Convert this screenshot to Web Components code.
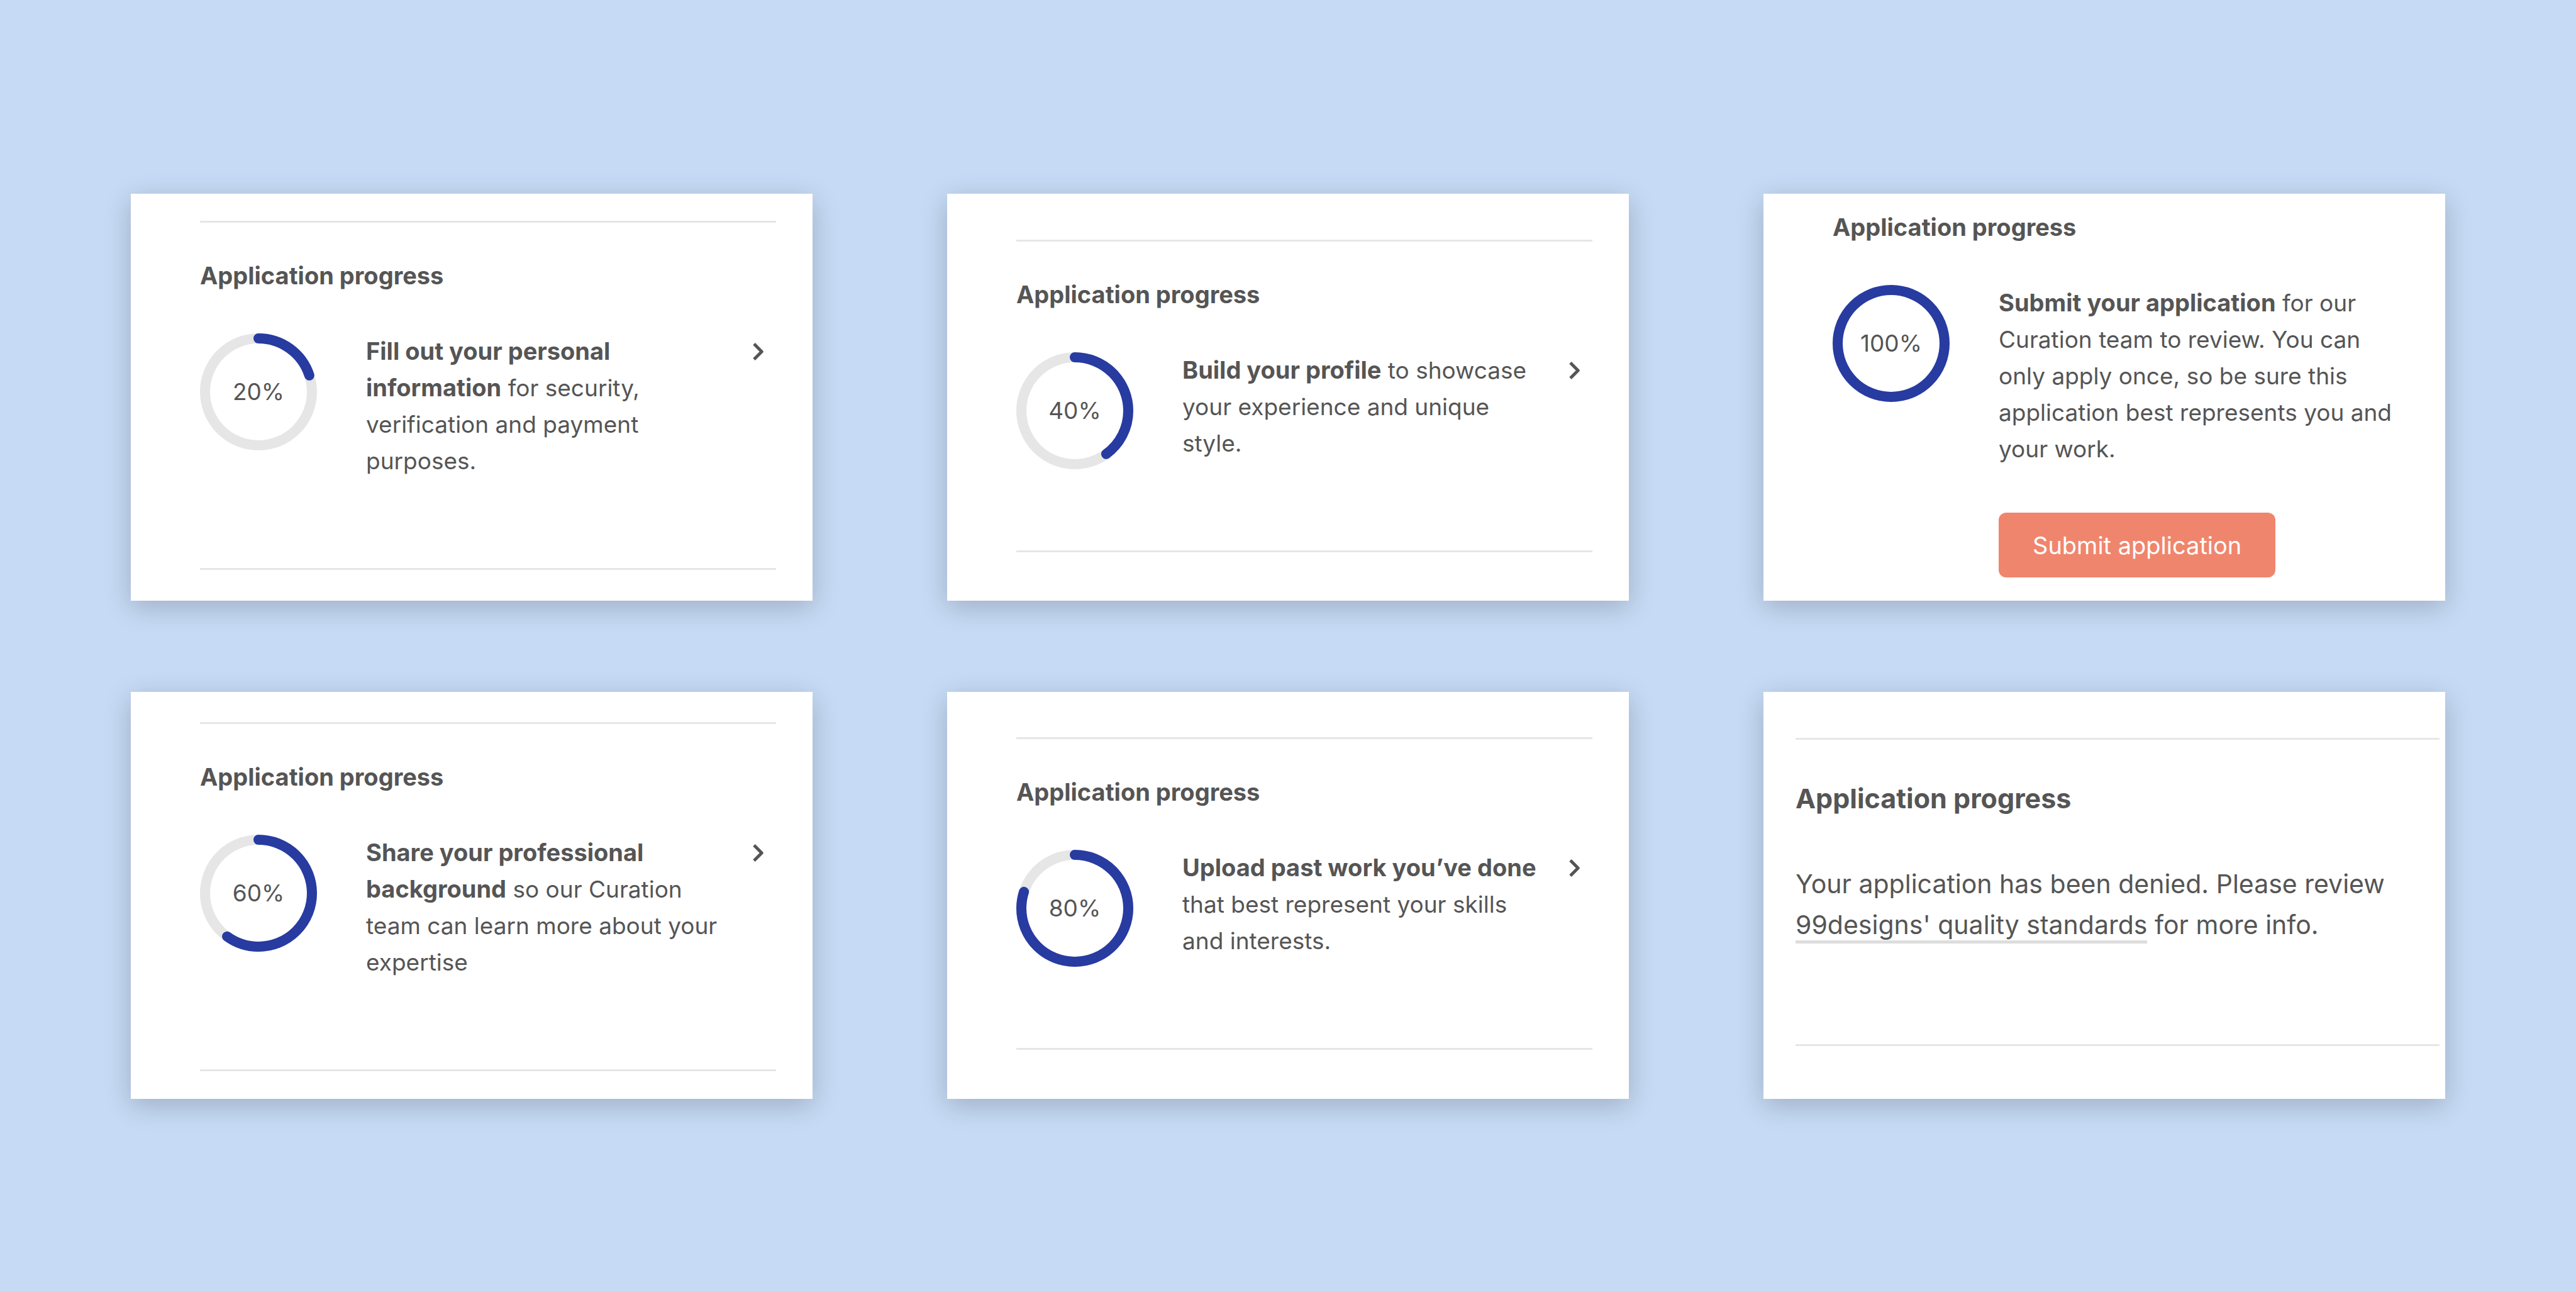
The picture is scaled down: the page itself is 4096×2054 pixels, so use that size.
<!DOCTYPE html>
<html lang="en">
<head>
<meta charset="utf-8">
<meta name="viewport" content="width=device-width, initial-scale=1">
<title>Application progress</title>
<style>
  body {
    margin: 0;
    background: #c6daf5;
    color: #555;
    font-family: Inter, "Liberation Sans", sans-serif;
  }
</style>
</head>
<body>
<card-board>
  <progress-card style="--inset-top: 43px; --inset-bottom: 49px">
    <progress-step value="20" href="#personal"><b>Fill out your personal information</b> for security, verification and payment purposes.</progress-step>
  </progress-card>
  <progress-card style="--inset-top: 73px">
    <progress-step value="40" href="#profile"><b>Build your profile</b> to showcase your experience and unique style.</progress-step>
  </progress-card>
  <progress-card plain style="--inset-top: 24px">
    <progress-step value="100"><b>Submit your application</b> for our Curation team to review. You can only apply once, so be sure this application best represents you and your work.
      <action-button slot="action">Submit application</action-button>
    </progress-step>
  </progress-card>
  <progress-card style="--inset-top: 48px; --inset-bottom: 44px">
    <progress-step value="60" href="#background"><b>Share your professional background</b> so our Curation team can learn more about your expertise</progress-step>
  </progress-card>
  <progress-card style="--inset-top: 72px">
    <progress-step value="80" href="#portfolio"><b>Upload past work you’ve done</b> that best represent your skills and interests.</progress-step>
  </progress-card>
  <progress-card large style="--inset-top: 73px">
    <status-message>Your application has been denied. Please review <text-link href="#quality">99designs' quality standards</text-link> for more info.</status-message>
  </progress-card>
</card-board>

<script>
  class BaseElement extends HTMLElement {
    connectedCallback() {
      if (this.shadowRoot) return;
      this.attachShadow({ mode: 'open' }).innerHTML = this.render();
    }
  }

  customElements.define('card-board', class extends BaseElement {
    render() {
      return `
        <style>
          :host { display: block; }
          main {
            display: grid;
            grid-template-columns: repeat(3, minmax(0, 1fr));
            gap: 145px 214px;
            padding: 308px 208px;
          }
        </style>
        <main><slot></slot></main>`;
    }
  });

  customElements.define('progress-card', class extends BaseElement {
    render() {
      return `
        <style>
          :host {
            --line: 58px;
            display: block;
            box-sizing: border-box;
            padding: var(--inset-top) 58px var(--inset-bottom, 36px) 110px;
            background: #fff;
            box-shadow: 0 10px 40px rgba(0, 0, 0, .2);
          }
          section {
            border: solid #e6e6e6;
            border-width: 3px 0;
            padding-top: 55px;
          }
          h2 {
            margin: 0 0 63px;
            font-size: 38px;
            font-weight: 700;
            line-height: var(--line);
          }
          :host([plain]) { --space-after: 0px; }
          :host([plain]) section { border: 0; padding-top: 0; }
          :host([large]) { --line: 65px; padding-left: 51px; padding-right: 9px; }
          :host([large]) section { padding-top: 61px; }
          :host([large]) h2 { font-size: 43px; margin-bottom: 71px; }
        </style>
        <section>
          <h2>Application progress</h2>
          <slot></slot>
        </section>`;
    }
  });

  customElements.define('progress-ring', class extends BaseElement {
    render() {
      const value = Number(this.getAttribute('value'));
      return `
        <style>
          :host {
            display: grid;
            place-items: center;
            flex: none;
            width: 186px;
            height: 186px;
            font-size: 37px;
          }
          svg, span { grid-area: 1 / 1; }
          svg { width: 100%; height: 100%; }
          circle { fill: none; stroke-width: 16; }
          .track { stroke: #e6e6e6; }
          .bar { stroke: #273ba1; stroke-linecap: round; }
        </style>
        <svg viewBox="0 0 186 186" role="img" aria-label="${value}% complete">
          <circle class="track" cx="93" cy="93" r="85"/>
          <circle class="bar" cx="93" cy="93" r="85" pathLength="100"
            stroke-dasharray="${value} ${value < 100 ? 100 : 0}" transform="rotate(-90 93 93)"/>
        </svg>
        <span>${value}%</span>`;
    }
  });

  customElements.define('progress-step', class extends BaseElement {
    render() {
      const href = this.getAttribute('href');
      return `
        <style>
          :host {
            display: flex;
            align-items: flex-start;
            font-size: 37px;
            line-height: var(--line);
          }
          .body {
            flex: 1;
            min-width: 0;
            margin-left: 78px;
            padding-bottom: var(--space-after, 141px);
          }
          p { margin: 0; }
          /* the larger bold run must not make its line taller */
          ::slotted(b) { font-size: 38px; line-height: 1; }
          a {
            display: flex;
            align-items: center;
            height: var(--line);
            margin: 0 20px 0 34px;
            color: inherit;
          }
          svg {
            width: 17px;
            height: 28px;
            fill: none;
            stroke: currentColor;
            stroke-width: 5;
            stroke-linejoin: round;
          }
        </style>
        <progress-ring value="${this.getAttribute('value')}"></progress-ring>
        <div class="body">
          <p><slot></slot></p>
          <slot name="action"></slot>
        </div>
        ${href ? `<a href="${href}" aria-label="Continue"><svg viewBox="0 0 17 28"><path d="M2 1.8 14.2 14 2 26.2"/></svg></a>` : ''}`;
    }
  });

  customElements.define('action-button', class extends BaseElement {
    render() {
      return `
        <style>
          :host { display: block; margin-top: 72px; }
          button {
            display: block;
            height: 103px;
            padding: 0 54px;
            border: 0;
            border-radius: 12px;
            background: #f0856d;
            color: #fff;
            font: 400 38px/58px Inter, "Liberation Sans", sans-serif;
          }
        </style>
        <button type="button"><slot></slot></button>`;
    }
  });

  customElements.define('text-link', class extends BaseElement {
    render() {
      return `
        <style>
          :host { display: inline; }
          a { color: inherit; text-decoration: none; border-bottom: 5px solid #ddd; }
        </style>
        <a href="${this.getAttribute('href')}"><slot></slot></a>`;
    }
  });

  customElements.define('status-message', class extends BaseElement {
    render() {
      return `
        <style>
          :host { display: block; padding-bottom: 157px; font-size: 41px; line-height: var(--line); }
          p { margin: 0; }
        </style>
        <p><slot></slot></p>`;
    }
  });
</script>
</body>
</html>
